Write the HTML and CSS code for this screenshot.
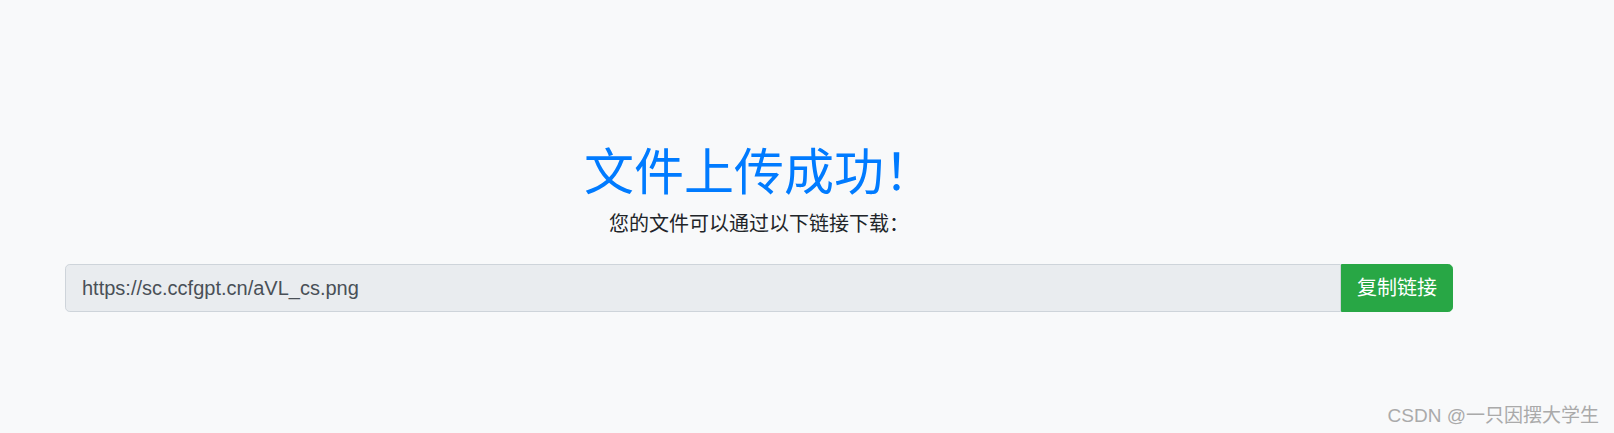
FILE: index.html
```html
<!DOCTYPE html>
<html lang="zh-CN">
  <head>
    <meta charset="UTF-8" />
    <meta name="viewport" content="width=device-width, initial-scale=1.0" />
    <title>文件上传成功</title>
    <link rel="stylesheet" href="styles.css">
  </head>
  <body>
    <div class="container">
      <h1 class="title">文件上传成功！</h1>
      <p class="lead">您的文件可以通过以下链接下载：</p>

      <div class="input-group">
        <input type="text" id="file-link" class="form-control" value="https://sc.ccfgpt.cn/aVL_cs.png" readonly />
        <button type="button" class="btn-copy">复制链接</button>
      </div>
    </div>

    <div class="watermark">CSDN @一只因摆大学生</div>
  </body>
</html>
```

FILE: styles.css
```css
html, body {
    height: 100%;
}
body {
    font-family: "Liberation Sans", "Noto Sans CJK SC", sans-serif;
    margin: 0;
    background-color: #f8f9fa;
    color: #212529;
    position: relative;
    overflow: hidden;
}
.container {
    width: 1388px;
    margin-left: 65px;
    padding-top: 143px;
    text-align: center;
}
.title {
    margin: 0 0 6px;
    font-size: 50px;
    font-weight: 400;
    line-height: 1.2;
    color: #007bff;
}
.lead {
    margin: 0 0 25px;
    font-size: 20px;
    font-weight: 400;
    line-height: 1.5;
}
.input-group {
    display: flex;
}
.form-control {
    flex: 1;
    height: 48px;
    padding: 8px 16px;
    font-family: inherit;
    font-size: 20px;
    line-height: 1.5;
    color: #495057;
    background-color: #e9ecef;
    border: 1px solid #ced4da;
    border-radius: 4.8px 0 0 4.8px;
    box-sizing: border-box;
    outline: none;
}
.btn-copy {
    width: 112px;
    height: 48px;
    padding: 8px 0;
    font-family: inherit;
    font-size: 20px;
    line-height: 1.5;
    white-space: nowrap;
    color: #fff;
    background-color: #28a745;
    border: 1px solid #28a745;
    border-radius: 0 4.8px 4.8px 0;
    box-sizing: border-box;
}
.watermark {
    position: absolute;
    right: 15px;
    bottom: 6px;
    font-size: 19px;
    color: #aaa;
}
```
